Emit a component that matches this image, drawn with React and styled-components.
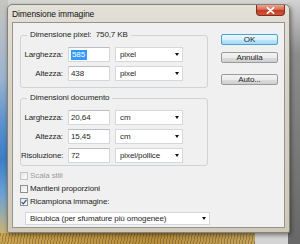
import React from 'react';
import styled, { createGlobalStyle } from 'styled-components';

const Global = createGlobalStyle`
  html, body { margin: 0; padding: 0; }
  body {
    font-family: "Liberation Sans", Arial, sans-serif;
    font-size: 8px;
    letter-spacing: -0.1px;
    color: #1f1f1f;
  }
`;

const Desktop = styled.div`
  width: 300px;
  height: 244px;
  overflow: hidden;
  box-sizing: border-box;
  padding: 4px 0 0 7px;
  background:
    repeating-linear-gradient(100deg, rgba(80, 55, 15, 0.35) 0 1px, transparent 1px 3px) left bottom / 255px 11px no-repeat,
    linear-gradient(90deg, #c9a452, #b88f3f 60%, #c2a25c 100%) left bottom / 255px 11px no-repeat,
    linear-gradient(180deg, #c6c5c0 0%, #b4bcc6 15%, #9cb3cf 32%, #5d92cc 50%, #3c7ec6 65%, #6ea2d3 80%, #c6b27a 95%) left top / 8px 100% no-repeat,
    linear-gradient(180deg, #d2d2d2 0%, #8c8c8c 22%, #676767 100%) right top / 12px 100% no-repeat,
    #d4d4d4;
`;

const Window = styled.div`
  width: 283px;
  height: 229px;
  box-sizing: border-box;
  display: flex;
  flex-direction: column;
  padding: 0 4px 4px 4px;
  border: 1px solid #86826f;
  border-radius: 5px 5px 2px 2px;
  background: linear-gradient(180deg, #e3e0d8 0%, #d6d1c5 40%, #cfc9bb 100%);
  box-shadow: 1px 2px 4px rgba(0, 0, 0, 0.45);
`;

const TitleBar = styled.div`
  height: 17px;
  display: flex;
  justify-content: space-between;
  align-items: flex-start;
`;

const Title = styled.div`
  margin-top: 4px;
  line-height: 10px;
  font-size: 8.5px;
  color: #141414;
`;

const CloseButton = styled.div`
  width: 29px;
  height: 11px;
  box-sizing: border-box;
  display: flex;
  align-items: center;
  justify-content: center;
  border: 1px solid #7a2f22;
  border-top: none;
  border-radius: 0 0 4px 4px;
  background: linear-gradient(180deg, #e9a897 0%, #d96a52 45%, #c43a22 55%, #d2553a 100%);
`;

const Client = styled.div`
  flex: 1;
  display: flex;
  background: #f0f0f0;
  border: 1px solid #97938a;
  padding: 7px 0 0 7px;
`;

const LeftCol = styled.div`
  width: 188px;
  display: flex;
  flex-direction: column;
`;

const Group = styled.fieldset`
  margin: ${p => p.$top || 0}px 0 0 0;
  padding: 0 0 ${p => p.$bottom}px 0;
  border: 1px solid #cdd3d7;
  border-radius: 3px;
  min-inline-size: 0;
`;

const Legend = styled.legend`
  margin-left: 6px;
  padding: 0 3px;
  line-height: 10px;
  font-size: 8px;
`;

const Rows = styled.div`
  display: flex;
  flex-direction: column;
  gap: 4px;
  padding-top: 7px;
`;

const Row = styled.div`
  display: grid;
  grid-template-columns: 42px 42px 68px;
  column-gap: 5px;
  align-items: center;
`;

const Label = styled.div`
  text-align: right;
  white-space: nowrap;
`;

const Field = styled.div`
  height: 15px;
  box-sizing: border-box;
  display: flex;
  align-items: center;
  padding: 0 2px;
  background: #fff;
  border: 1px solid #d4d8dc;
  border-top-color: #b9bec4;
`;

const Selected = styled.span`
  background: #3399ff;
  color: #fff;
  padding: 0 2px 0 1px;
  line-height: 10px;
`;

const Select = styled.div`
  height: ${p => p.$h || 15}px;
  width: ${p => (p.$w ? p.$w + 'px' : 'auto')};
  margin: ${p => p.$top || 0}px 0 0 ${p => p.$left || 0}px;
  box-sizing: border-box;
  display: flex;
  align-items: center;
  justify-content: space-between;
  padding: 0 3px 0 4px;
  background: #fff;
  border: 1px solid #d4d8dc;
  white-space: nowrap;
  overflow: hidden;
`;

const Arrow = styled.span`
  flex: none;
  width: 0;
  height: 0;
  border-left: 2.5px solid transparent;
  border-right: 2.5px solid transparent;
  border-top: 3px solid #111;
`;

const Checks = styled.div`
  margin-top: 3px;
  display: flex;
  flex-direction: column;
`;

const CheckRow = styled.div`
  height: 13px;
  display: flex;
  align-items: center;
  gap: 2px;
  color: ${p => (p.$disabled ? '#9c9c9c' : '#1f1f1f')};
`;

const Box = styled.span`
  width: 8px;
  height: 8px;
  box-sizing: border-box;
  display: flex;
  align-items: center;
  justify-content: center;
  border: 1px solid ${p => (p.$disabled ? '#c4c4c4' : '#8e8f8f')};
  background: linear-gradient(135deg, #e6e6e6, #fdfdfd);
`;

const ButtonCol = styled.div`
  width: 57px;
  margin-left: 13px;
  padding-top: 4px;
  display: flex;
  flex-direction: column;
`;

const Button = styled.div`
  height: 11px;
  margin-top: ${p => p.$gap || 0}px;
  box-sizing: border-box;
  display: flex;
  align-items: center;
  justify-content: center;
  font-size: 8px;
  border: 1px solid ${p => (p.$primary ? '#4aa3d0' : '#9a9a9a')};
  border-radius: 2px;
  background: ${p =>
    p.$primary
      ? 'linear-gradient(180deg, #eaf6fd 0%, #d9effc 50%, #bee6fd 51%, #a7d9f5 100%)'
      : 'linear-gradient(180deg, #f3f3f3 0%, #ebebeb 50%, #dddddd 51%, #cfcfcf 100%)'};
`;

const Check = () => (
  <svg width="6" height="6" viewBox="0 0 6 6">
    <path d="M0.6 3.1 L2.3 4.8 L5.4 0.8" fill="none" stroke="#2a4d8f" strokeWidth="1.2" />
  </svg>
);

const CloseX = () => (
  <svg width="9" height="7" viewBox="0 0 9 7">
    <path d="M1.5 0.8 L7.5 6.2 M7.5 0.8 L1.5 6.2" stroke="#fff" strokeWidth="1.8" strokeLinecap="round" />
  </svg>
);

const pixelRows = [
  { label: 'Larghezza:', value: '585', unit: 'pixel', selected: true },
  { label: 'Altezza:', value: '438', unit: 'pixel' },
];

const docRows = [
  { label: 'Larghezza:', value: '20,64', unit: 'cm' },
  { label: 'Altezza:', value: '15,45', unit: 'cm' },
  { label: 'Risoluzione:', value: '72', unit: 'pixel/pollice' },
];

const DimRow = ({ label, value, unit, selected }) => (
  <Row>
    <Label>{label}</Label>
    <Field>{selected ? <Selected>{value}</Selected> : value}</Field>
    <Select>
      {unit}
      <Arrow />
    </Select>
  </Row>
);

export default function App() {
  return (
    <Desktop>
      <Global />
      <Window>
        <TitleBar>
          <Title>Dimensione immagine</Title>
          <CloseButton>
            <CloseX />
          </CloseButton>
        </TitleBar>
        <Client>
          <LeftCol>
            <Group $bottom={6}>
              <Legend>Dimensione pixel:&nbsp; 750,7 KB</Legend>
              <Rows>
                {pixelRows.map(r => (
                  <DimRow key={r.label} {...r} />
                ))}
              </Rows>
            </Group>
            <Group $top={5} $bottom={2}>
              <Legend>Dimensioni documento</Legend>
              <Rows>
                {docRows.map(r => (
                  <DimRow key={r.label} {...r} />
                ))}
              </Rows>
            </Group>
            <Checks>
              <CheckRow $disabled>
                <Box $disabled />
                Scala stili
              </CheckRow>
              <CheckRow>
                <Box />
                Mantieni proporzioni
              </CheckRow>
              <CheckRow>
                <Box>
                  <Check />
                </Box>
                Ricampiona immagine:
              </CheckRow>
            </Checks>
            <Select $h={13} $w={185} $left={5} $top={4}>
              Bicubica (per sfumature più omogenee)
              <Arrow />
            </Select>
          </LeftCol>
          <ButtonCol>
            <Button $primary>OK</Button>
            <Button $gap={7}>Annulla</Button>
            <Button $gap={11}>Auto...</Button>
          </ButtonCol>
        </Client>
      </Window>
    </Desktop>
  );
}
